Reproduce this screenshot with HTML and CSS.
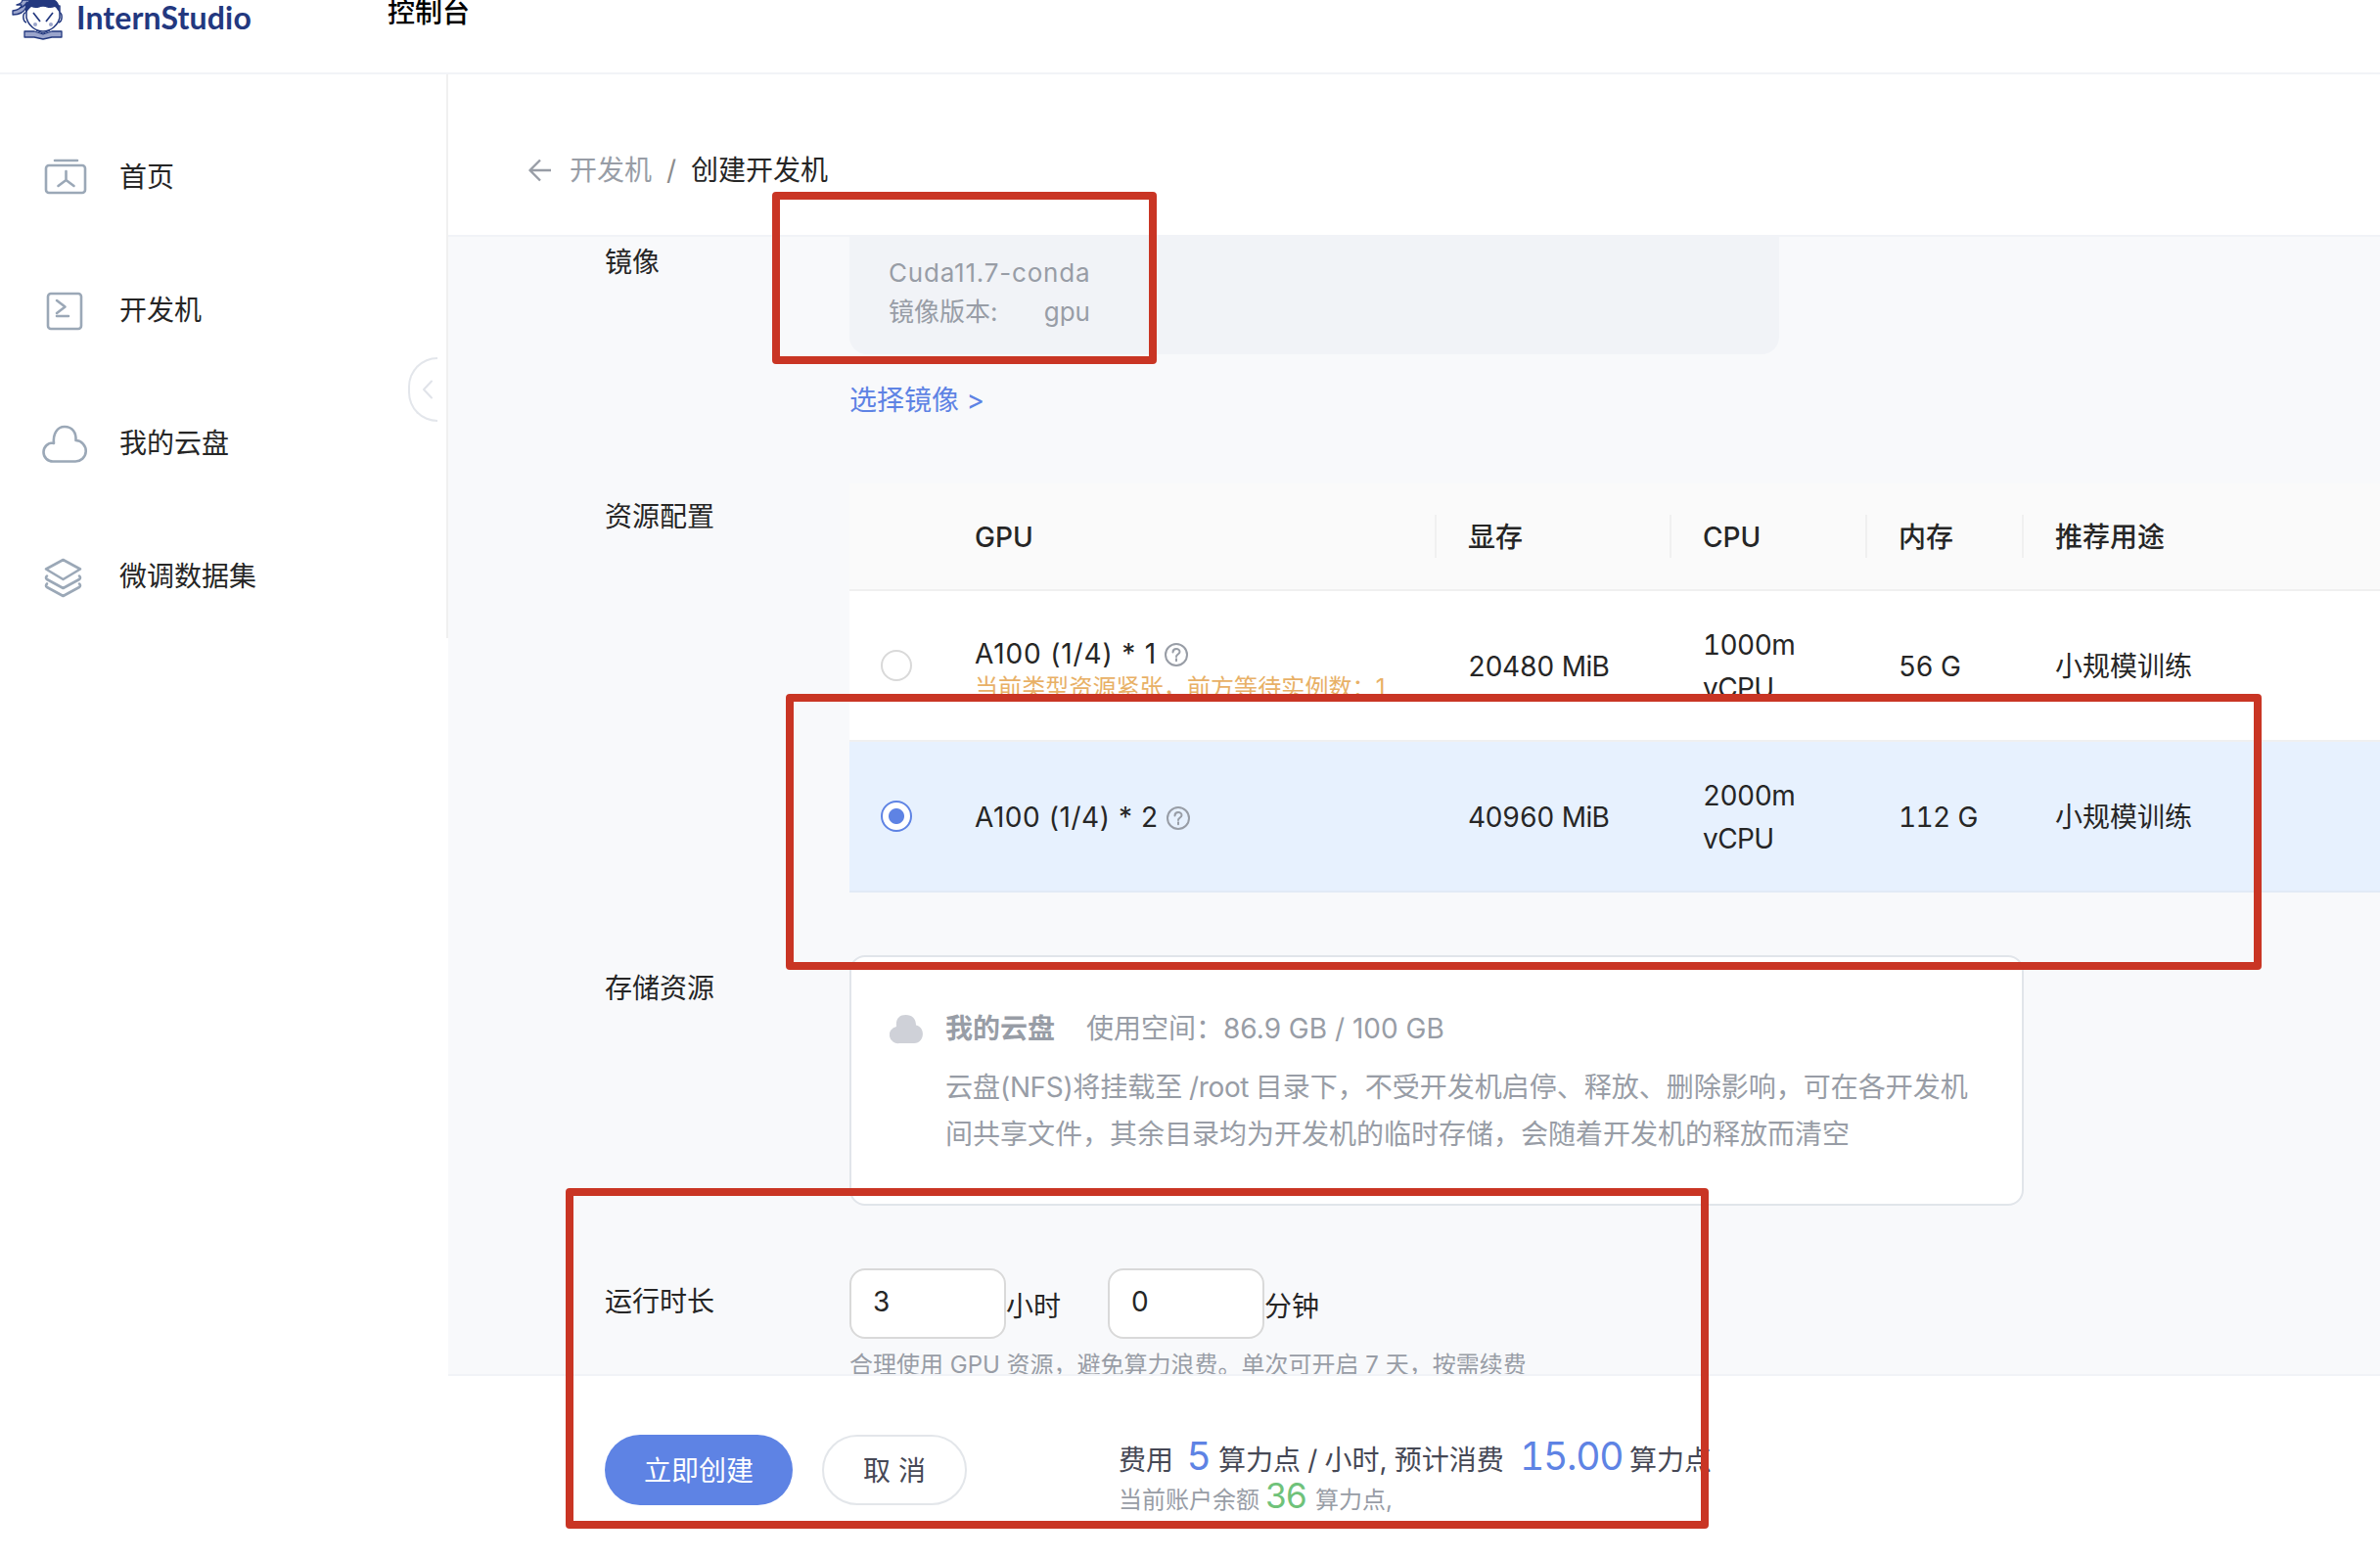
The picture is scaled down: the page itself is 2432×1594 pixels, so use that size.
FILE: index.html
```html
<!DOCTYPE html>
<html lang="zh-CN">
<head>
<meta charset="utf-8">
<title>InternStudio</title>
<link rel="stylesheet" href="styles.css">
</head>
<body>
<div class="app">
  <header class="topbar">
    <svg class="logo" viewBox="0 0 60 48" width="60" height="48">
      <path d="M1 11c6-1 9-3 9-6L5 5c4-1 5-2 6-5h13L15 7c-2 5-6 8-14 8z" fill="#9aa4cb" stroke="#23387f" stroke-width="1.3"/>
      <path d="M8 8c4-1 6-3 8-6" fill="none" stroke="#23387f" stroke-width="1.6"/>
      <path d="M14 13c-3 0-3 9 1 10M49 13c3 0 3 9-1 10" fill="#fff" stroke="#23387f" stroke-width="1.5"/>
      <path d="M15 6v12c2 8 9 14 17 14s15-6 17-14V6z" fill="#fff" stroke="#23387f" stroke-width="1.5"/>
      <path d="M14 13V5l4-5h26c4 2 5 6 5 13-2-2-3-5-5-6-4 2-8 1-12-1-4 2-8 3-12 1-3 2-4 5-6 6z" fill="#23387f"/>
      <path d="M22 13l7 9M42 13l-7 9" fill="none" stroke="#23387f" stroke-width="1.7"/>
      <circle cx="24" cy="25" r="2" fill="#9aa4cb"/><circle cx="40" cy="25" r="2" fill="#9aa4cb"/>
      <path d="M13 32h10l9 3 9-3h10v6H41l-9 2-9-2H13z" fill="#9aa4cb" stroke="#23387f" stroke-width="1.3"/>
      <path d="M25 31l7 3 7-3" fill="none" stroke="#23387f" stroke-width="1.3"/>
    </svg>
    <span class="brand">InternStudio</span>
    <span class="console">控制台</span>
  </header>
  <div class="body">
    <nav class="side">
      <a class="nav"><svg width="48" height="48" viewBox="0 0 48 48"><rect x="5" y="13" width="40" height="28" rx="3"/><path d="M14 8h23M25.500 19v9l-8 6M25.500 28l8 6"/></svg><span>首页</span></a>
      <a class="nav"><svg width="48" height="48" viewBox="0 0 48 48"><rect x="7" y="8" width="34" height="36" rx="3"/><path d="M16 15l8.500 6.500-8.500 6.500M16 31h12"/></svg><span>开发机</span></a>
      <a class="nav"><svg width="48" height="48" viewBox="0 0 48 48"><path d="M12 43.500a9.500 9.500 0 0 1 0-19l1 .5c-1-9 3-17 11-17s12 6 11.500 14a10.500 10.500 0 0 1-1 21.500z"/></svg><span>我的云盘</span></a>
      <a class="nav"><svg width="48" height="48" viewBox="0 0 48 48"><path d="M22.500 8L40 17.500 22.500 28 5 17.500zM6 24.500Q4 26 6 28l16.500 9L39 28q2-2 0-3.500M6 32.500Q4 34.500 6 36l16.500 9L39 36q2-2 0-3.500"/></svg><span>微调数据集</span></a>
      <div class="fold"><svg width="12" height="20" viewBox="0 0 12 20"><path d="M10 1.500L2 10l8 8.500"/></svg></div>
    </nav>
    <main class="main">
      <div class="crumbs">
        <svg class="back" width="24" height="24" viewBox="0 0 24 24"><path d="M23 12H2M12 1.500L1.500 12 12 22.500"/></svg>
        <span class="crumb">开发机</span><span class="slash">/</span><span class="current">创建开发机</span>
      </div>
      <div class="form">
        <section class="row image-row">
          <label class="label">镜像</label>
          <div>
            <div class="image-box"><div class="image-info"><div class="image-name">Cuda11.7-conda</div><div class="version"><span>镜像版本:</span><span>gpu</span></div></div></div>
            <a class="pick">选择镜像 &gt;</a>
          </div>
        </section>
        <section class="row resource-row">
          <label class="label">资源配置</label>
          <div class="table">
            <div class="tr head"><div></div><div>GPU</div><div>显存</div><div>CPU</div><div>内存</div><div>推荐用途</div></div>
            <div class="tr">
              <div class="pickcell"><i class="radio"></i></div>
              <div><div class="gpu tight">A100 (1/4) * 1<svg class="help" width="26" height="26" viewBox="0 0 26 26"><circle cx="13" cy="13" r="11"/><path d="M9.500 10.500c0-4.500 7-4.500 7-.5 0 2.500-3.500 2.500-3.500 5M13 17.300v1.900"/></svg></div><div class="warn">当前类型资源紧张，前方等待实例数：1</div></div>
              <div class="num">20480 MiB</div><div class="num">1000m<br>vCPU</div><div class="num">56 G</div><div>小规模训练</div>
            </div>
            <div class="tr selected">
              <div class="pickcell"><i class="radio on"></i></div>
              <div><div class="gpu">A100 (1/4) * 2<svg class="help" width="26" height="26" viewBox="0 0 26 26"><circle cx="13" cy="13" r="11"/><path d="M9.500 10.500c0-4.500 7-4.500 7-.5 0 2.500-3.500 2.500-3.500 5M13 17.300v1.900"/></svg></div></div>
              <div class="num">40960 MiB</div><div class="num">2000m<br>vCPU</div><div class="num">112 G</div><div>小规模训练</div>
            </div>
          </div>
        </section>
        <section class="row storage-row">
          <label class="label">存储资源</label>
          <div class="card">
            <svg class="cloud" width="36" height="32" viewBox="0 0 36 32"><path d="M10 30a8.500 8.500 0 0 1-3-17C6 5 10 1 16.500 1S27 5 27 11.500c10 2 9 18.500-2 18.500z"/></svg>
            <div class="card-text">
              <div class="disk"><b>我的云盘</b><span class="space">使用空间：86.9 GB / 100 GB</span></div>
              <p class="desc">云盘<span class="latin">(NFS)</span>将挂载至 <span class="latin">/root</span> 目录下，不受开发机启停、释放、删除影响，可在各开发机<br>间共享文件，其余目录均为开发机的临时存储，会随着开发机的释放而清空</p>
            </div>
          </div>
        </section>
        <section class="row time-row">
          <label class="label">运行时长</label>
          <div>
            <div class="times"><span class="input">3</span><span class="unit">小时</span><span class="input">0</span><span class="unit">分钟</span></div>
            <div class="hint">合理使用 GPU 资源，避免算力浪费。单次可开启 7 天，按需续费</div>
          </div>
        </section>
      </div>
      <footer class="footer">
        <button class="btn primary">立即创建</button>
        <button class="btn">取 消</button>
        <div class="cost">
          <div class="fee"><span class="w-fee">费用</span><span class="big w-five">5</span><span class="w-rate">算力点 / 小时, 预计消费</span><span class="big w-total">15.00</span><span>算力点</span></div>
          <div class="balance"><span class="w-bal">当前账户余额</span><span class="green">36</span><span>算力点,</span></div>
        </div>
      </footer>
    </main>
  </div>
  <div class="mark mark-image"></div>
  <div class="mark mark-gpu"></div>
  <div class="mark mark-submit"></div>
</div>
</body>
</html>
```

FILE: styles.css
```css
* { box-sizing: border-box; }
body { margin: 0; background: #fff; color: #262626; font: 28px/44px Inter, "Noto Sans CJK SC", sans-serif; }
.app { position: relative; width: 2432px; height: 1594px; overflow: hidden; display: flex; flex-direction: column; white-space: nowrap; }
svg { display: block; fill: none; flex: none; stroke-linecap: round; stroke-linejoin: round; }

.topbar { height: 76px; flex: none; display: flex; align-items: flex-start; border-bottom: 2px solid #f2f3f7; padding-left: 12px; }
.logo { stroke-linecap: butt; }
.brand { width: 178px; margin-left: 6px; margin-top: -4px; font-family: Lato, sans-serif; font-weight: 700; font-size: 32px; letter-spacing: .15px; color: #23387f; }
.console { margin-left: 140px; margin-top: -9px; color: #000; font-weight: 500; }

.body { flex: 1; min-height: 0; display: flex; }
.side { position: relative; width: 458px; flex: none; padding: 36px 0 0 42px; }
.side::after { content: ""; position: absolute; right: 0; top: 0; width: 2px; height: 576px; background: #f0f0f0; }
.nav { height: 136px; display: flex; align-items: center; gap: 32px; }
.nav span { padding-top: 2px; }
.nav svg { stroke: #9ba8b7; stroke-width: 2.6; }
.fold { position: absolute; left: 417px; top: 289px; width: 30px; height: 66px; border: 2px solid #e3e6eb; border-right: 0; border-radius: 33px 0 0 33px; padding: 21px 0 0 12px; }
.fold svg { stroke: #e0e3e9; stroke-width: 2; }

.main { flex: 1; min-width: 0; display: flex; flex-direction: column; }
.crumbs { height: 166px; flex: none; display: flex; align-items: center; padding: 32px 0 0 82px; border-bottom: 2px solid #f1f3f7; }
.back { stroke: #989da6; stroke-width: 2.4; stroke-linecap: butt; }
.crumb { color: #989da6; width: 84px; margin-left: 18px; }
.slash { color: #8c8c8c; width: 25px; margin-left: 15px; }
.current { font-weight: 400; }

.form { height: 1162px; flex: none; overflow: hidden; background: #f8f9fb; padding-left: 160px; display: flex; flex-direction: column; }
.row { display: flex; flex: none; }
.label { width: 250px; flex: none; }
.image-row { height: 252px; }
.image-row .label { padding-top: 4px; }
.image-box { width: 950px; height: 138px; margin-top: -18px; border-radius: 18px; background: #f1f3f7; padding: 35px 40px; font-size: 26px; line-height: 40px; color: #989da6; }
.image-info { width: 206px; }
.version { display: flex; justify-content: space-between; }
.image-name { letter-spacing: .8px; }
.pick { display: block; margin-top: 25px; color: #5e83e4; word-spacing: -.5px; }
.resource-row { height: 482px; }
.resource-row .label { padding-top: 12px; }
.table { width: 1600px; flex: none; }
.tr { height: 154px; display: grid; grid-template-columns: 96px 504px 240px 200px 160px 400px; align-items: center; background: #fff; border-bottom: 2px solid #f0f0f0; }
.tr > div { padding-left: 32px; padding-top: 1px; }
.tr > .pickcell { padding-top: 0; }
.num { font-variant-numeric: tabular-nums; letter-spacing: -.6px; word-spacing: 1px; }
.head { height: 110px; background: #fafafa; font-weight: 500; }
.head > div { position: relative; }
.head > div:nth-child(n+3)::before { content: ""; position: absolute; left: -2px; top: 0; width: 2px; height: 44px; background: #f0f0f0; }
.selected { background: #e7f1fe; border-bottom-color: #e2eaf6; }
.radio { display: block; width: 32px; height: 32px; border: 2px solid #d9d9d9; border-radius: 50%; background: #fff; }
.radio.on { border-color: #5e83e4; background: radial-gradient(circle, #5e83e4 0 7.5px, #fff 8.5px); }
.gpu { display: flex; align-items: center; letter-spacing: .55px; }
.gpu.tight { height: 36px; margin-top: 7px; letter-spacing: .85px; }
.help { margin-left: 7px; margin-top: 2px; stroke: #989da6; stroke-width: 2; }
.warn { font-size: 24px; line-height: 32px; margin-top: 1px; color: #e8b066; letter-spacing: .1px; }
.storage-row { height: 320px; }
.storage-row .label { padding-top: 12px; }
.card { width: 1200px; height: 256px; background: #fff; border: 2px solid #e1e5ea; border-radius: 16px; display: flex; gap: 21px; padding: 49px 0 0 39px; color: #989da6; }
.cloud { margin-top: 9px; }
.cloud path { fill: #cfd1d8; }
.disk { height: 48px; display: flex; align-items: center; gap: 32px; }
.disk b { font-weight: 700; }
.desc { margin: 12px 0 0; line-height: 48px; word-spacing: -1.2px; }
.latin { letter-spacing: -.35px; }
.time-row .label { padding-top: 12px; }
.times { display: flex; }
.input { width: 160px; height: 72px; border: 2px solid #d9d9d9; border-radius: 16px; background: #fff; padding: 10px 22px; }
.unit { width: 104px; padding-top: 17px; }
.hint { font-size: 24px; line-height: 40px; margin-top: 7px; color: #989da6; }

.footer { flex: 1; border-top: 2px solid #f1f3f7; display: flex; padding: 60px 0 0 160px; color: #464855; }
.btn { width: 148px; height: 72px; border: 2px solid #e3e6ea; border-radius: 36px; background: #fff; color: #464855; font: inherit; padding: 2px 0 0; margin-right: 155px; }
.btn.primary { width: 192px; border: 0; background: #5e83e4; color: #fff; margin-right: 30px; }
.fee, .balance { display: flex; align-items: baseline; }
.fee { height: 44px; margin-top: 0; }
.big { font-size: 39px; color: #5e83e4; }
.w-fee { width: 70px; }
.w-five { width: 32px; }
.w-rate { width: 308px; word-spacing: -.7px; }
.w-total { width: 112px; font-variant-numeric: tabular-nums; letter-spacing: -1.3px; }
.balance { font-size: 24px; color: #989da6; margin-top: -4px; }
.w-bal { width: 150px; }
.green { width: 51px; font-size: 35px; letter-spacing: -.5px; color: #6fc27a; }

.mark { position: absolute; border: 8px solid #c93524; border-radius: 4px; }
.mark-image { left: 789px; top: 196px; width: 393px; height: 176px; }
.mark-gpu { left: 803px; top: 709px; width: 1508px; height: 282px; }
.mark-submit { left: 578px; top: 1214px; width: 1168px; height: 348px; }
```
